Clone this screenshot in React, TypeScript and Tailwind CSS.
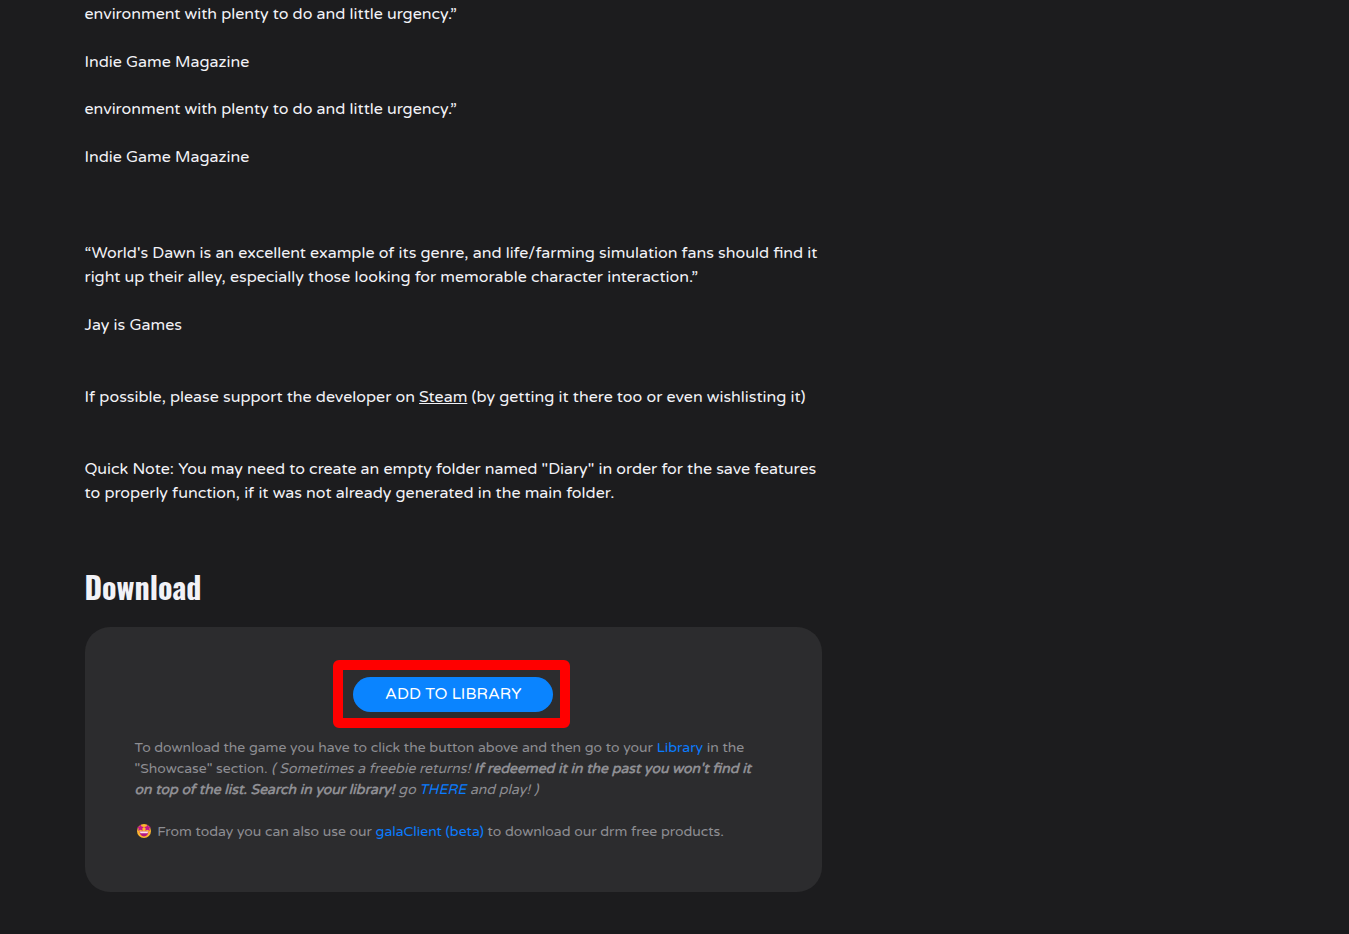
import type { ReactNode } from 'react';

interface ReviewProps {
  source: string;
  children: ReactNode;
}

function Review({ source, children }: ReviewProps) {
  return (
    <figure className="flex flex-col gap-6">
      <blockquote>{children}</blockquote>
      <figcaption>{source}</figcaption>
    </figure>
  );
}

function StarStruck() {
  return (
    <svg viewBox="0 0 14 14" className="mr-[3px] ml-0.5 inline-block size-[14px] align-[-2px]" role="img" aria-label="Star-struck">
      <circle cx="7" cy="7" r="7" fill="#fdb62f" />
      <path d="M3.6 0.4 4.6 2.6 6.9 2.9 5.3 4.5 5.7 6.8 3.5 5.8 1.2 6.9 1.6 4.5 0 2.9 2.4 2.5Z" fill="#c2188b" />
      <path d="M10.4 0.4 11.6 2.5 14 2.9 12.4 4.5 12.8 6.9 10.5 5.8 8.3 6.8 8.7 4.5 7.1 2.9 9.4 2.6Z" fill="#c2188b" />
      <path d="M2.6 7.6H11.4C11.4 10.6 9.6 12.4 7 12.4S2.6 10.6 2.6 7.6Z" fill="#b5177f" />
      <path d="M2.9 7.6H11.1L10.6 9.2H3.4Z" fill="#fde3ee" />
    </svg>
  );
}

function DownloadCard() {
  return (
    <div className="rounded-[25px] bg-[#2c2c2e] p-[50px] text-sm leading-[21px] text-[#8e8e93]">
      <div className="relative mx-auto mb-[25px] w-[200px]">
        <button type="button" className="h-[35px] w-full rounded-full bg-[#0a84ff] pb-0.5 text-base leading-6 text-white uppercase">
          Add to library
        </button>
        <div className="pointer-events-none absolute -top-[17px] -right-[17px] -bottom-4 -left-5 rounded-md border-10 border-[#ff0000]" />
      </div>
      <p className="pr-2">
        To download the game you have to click the button above and then go to your{' '}
        <a href="#library" className="text-[#0a7cff]">Library</a> in the "Showcase" section.{' '}
        <em>
          ( Sometimes a freebie returns!{' '}
          <strong>If redeemed it in the past you won't find it on top of the list. Search in your library!</strong> go{' '}
          <a href="#there" className="text-[#0a7cff]">THERE</a> and play! )
        </em>
      </p>
      <p className="mt-[21px]">
        <StarStruck /> From today you can also use our{' '}
        <a href="#client" className="text-[#0a7cff]">galaClient (beta)</a> to download our drm free products.
      </p>
    </div>
  );
}

export default function App() {
  return (
    <div className="flex min-h-screen flex-col bg-[#1c1c1e] font-['Varela_Round','Noto_Sans',sans-serif] text-base text-[#f2f2f7]">
      <main className="mx-auto w-full max-w-[1180px] grow">
        <article className="w-5/8 pt-0.5 pb-[38px]">
          <div className="flex flex-col gap-[23px]">
            <Review source="Indie Game Magazine">environment with plenty to do and little urgency.”</Review>
            <Review source="Indie Game Magazine">environment with plenty to do and little urgency.”</Review>
          </div>

          <div className="mt-[72px] flex flex-col gap-12">
            <Review source="Jay is Games">
              “World's Dawn is an excellent example of its genre, and life/farming simulation fans should find it right up their alley, especially those looking for memorable character interaction.”
            </Review>
            <p>
              If possible, please support the developer on <a href="#steam" className="underline">Steam</a> (by getting it there too or even wishlisting it)
            </p>
            <p>
              Quick Note: You may need to create an empty folder named "Diary" in order for the save features to properly function, if it was not already generated in the main folder.
            </p>
          </div>

          <h2 className="mt-[62px] mb-5 font-['Oswald',Roboto,sans-serif] text-3xl leading-10 font-bold">Download</h2>
          <DownloadCard />
        </article>
      </main>
      <footer className="h-1 bg-[#19191b]" />
    </div>
  );
}
